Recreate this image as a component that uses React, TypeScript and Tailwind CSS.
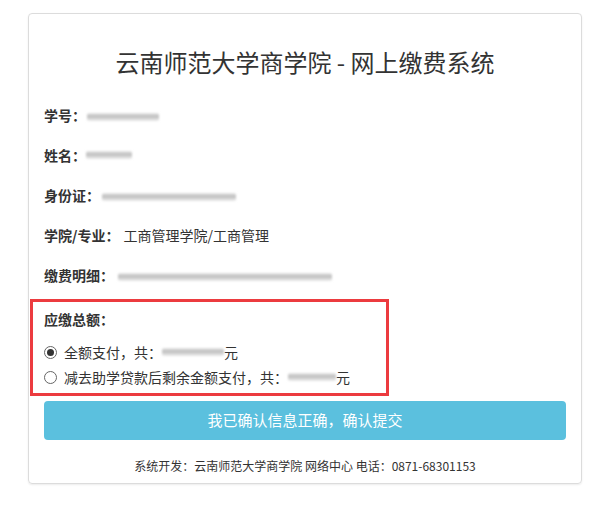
import React from "react";

const font = { fontFamily: '"Noto Sans CJK SC", "Noto Sans", sans-serif' };

function Blur({ w }: { w: number }) {
  return (
    <span
      className="inline-block h-[8px] rounded-[2px] bg-[linear-gradient(to_bottom,#e8e8e8,#bdbdbd_45%,#cfcfcf_60%,#ececec)] blur-[1px] align-middle"
      style={{ width: w }}
    />
  );
}

function Row({ label, children }: { label: string; children?: React.ReactNode }) {
  return (
    <div className="flex h-[40px] items-center text-[14px] leading-[20px] text-[#333]">
      <span className="font-bold">{label}</span>
      {children}
    </div>
  );
}

function Radio({ checked }: { checked?: boolean }) {
  return (
    <span className="mr-[7px] flex h-[13px] w-[13px] items-center justify-center rounded-full border border-[#666] bg-white">
      {checked && <span className="h-[7px] w-[7px] rounded-full bg-[#333]" />}
    </span>
  );
}

export default function App() {
  return (
    <div className="h-[505px] w-[602px] bg-white pt-[13px]" style={font}>
      <div className="ml-[28px] flex h-[471px] w-[554px] flex-col rounded-[4px] border border-[#dcdcdc] px-[15px] shadow-[0_1px_2px_rgba(0,0,0,0.08)]">
        <h1 className="mt-[31px] text-center text-[24px] leading-[34px] font-normal text-[#333]">
          云南师范大学商学院 - 网上缴费系统
        </h1>
        <div className="mt-[16px]">
          <Row label="学号：">
            <span className="ml-[1px]"><Blur w={72} /></span>
          </Row>
          <Row label="姓名：">
            <Blur w={46} />
          </Row>
          <Row label="身份证：">
            <span className="ml-[2px]"><Blur w={134} /></span>
          </Row>
          <Row label="学院/专业：">
            <span className="ml-[4px]">工商管理学院/工商管理</span>
          </Row>
          <Row label="缴费明细：">
            <span className="ml-[4px]"><Blur w={214} /></span>
          </Row>
        </div>
        <div className="ml-[-14px] mt-[4px] h-[97px] w-[359px] border-[3px] border-[#ec3b3f] pl-[11px] text-[14px] text-[#333]">
          <div className="mt-[7px] h-[20px] leading-[20px] font-bold">应缴总额：</div>
          <div className="mt-[13px] flex h-[20px] items-center leading-[20px]">
            <Radio checked />
            <span>全额支付，共：</span>
            <Blur w={62} />
            <span>元</span>
          </div>
          <div className="mt-[5px] flex h-[20px] items-center leading-[20px]">
            <Radio />
            <span>减去助学贷款后剩余金额支付，共：</span>
            <Blur w={48} />
            <span>元</span>
          </div>
        </div>
        <button className="mt-[5px] h-[39px] w-full rounded-[4px] bg-[#5bc0de] text-[15px] text-white">
          我已确认信息正确，确认提交
        </button>
        <div className="mt-[16px] text-center text-[12px] leading-[20px] text-[#333]">
          系统开发：云南师范大学商学院 网络中心 电话：0871-68301153
        </div>
      </div>
    </div>
  );
}
